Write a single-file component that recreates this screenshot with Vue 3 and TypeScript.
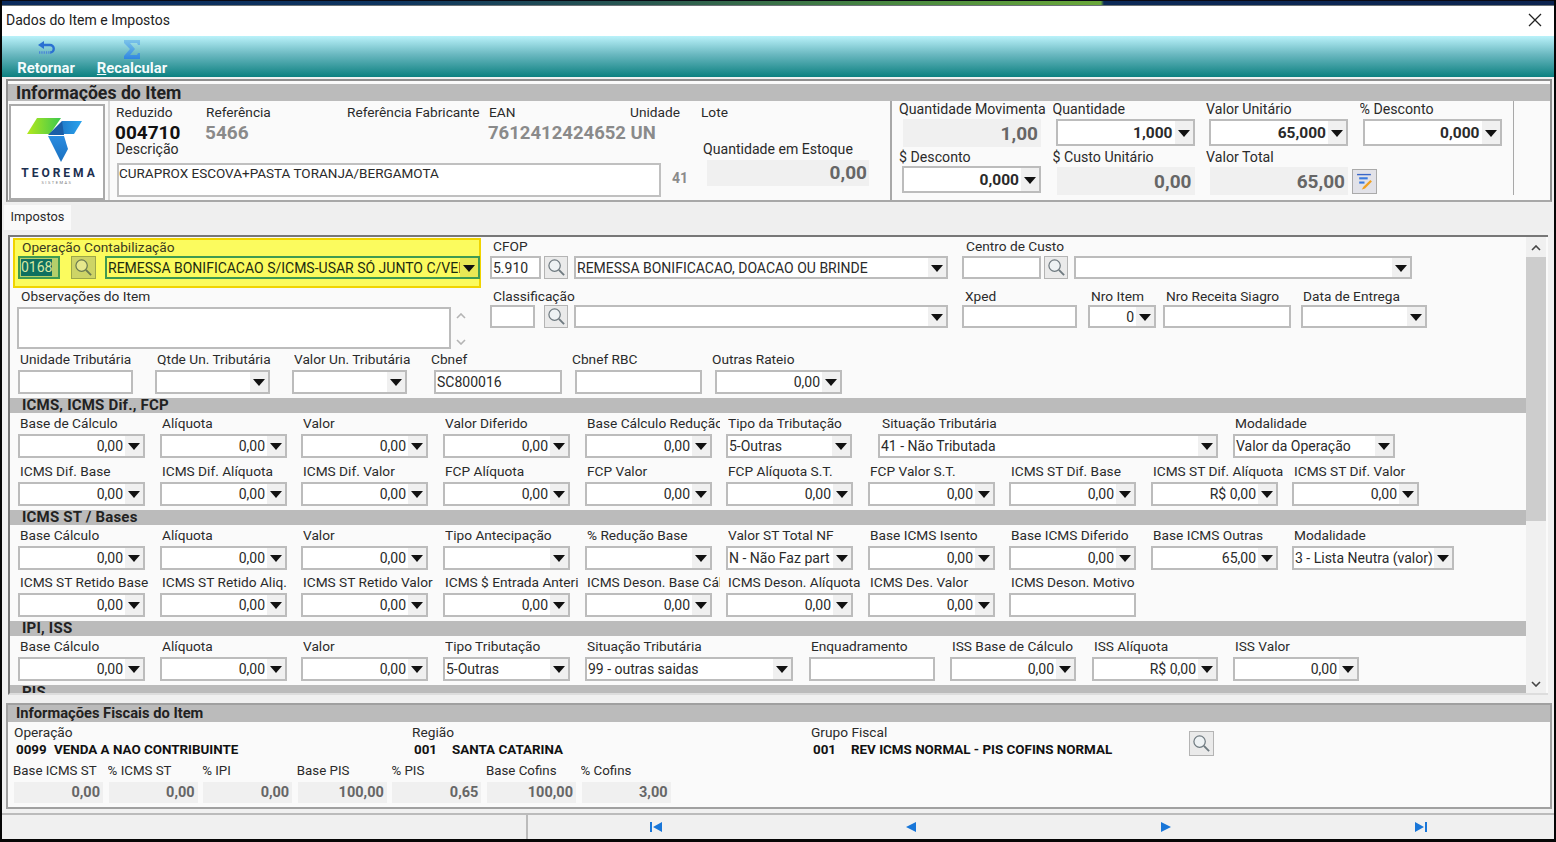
<script setup lang="ts">
type Kind = 'n' | 'c' | 'i' | 's'
interface Field { l: string; x: number; w: number; t: Kind; v: string; lx: number; mt: number; h: number }
interface Row { section?: string; fields?: Field[]; base?: number; yellow?: boolean; cls?: string }

const f = (l: string, x: number, w: number, t: Kind, v = '', lx = 2, mt = 3, h = 24): Field => ({ l, x, w, t, v, lx, mt, h })
const cols = [18, 160, 301, 443, 585, 726, 868, 1009, 1151, 1292]
const nums = (labels: string[], vals: Record<number, string> = {}) =>
  labels.map((l, i) => f(l, cols[i], 127, 'n', vals[i] ?? '0,00'))

const rows: Row[] = [
  {
    yellow: true, base: 481, cls: 'r-a',
    fields: [
      f('CFOP', 490, 51, 'i', '5.910', 3, 2, 23),
      f('', 544, 24, 's', '', 0, 2, 23),
      f('', 574, 374, 'c', 'REMESSA BONIFICACAO, DOACAO OU BRINDE', 0, 2, 23),
      f('Centro de Custo', 962, 79, 'i', '', 4, 2, 23),
      f('', 1044, 24, 's', '', 0, 2, 23),
      f('', 1074, 338, 'c', '', 0, 2, 23),
    ],
  },
  {
    cls: 'r-b', base: 490,
    fields: [
      f('Classificação', 490, 45, 'i', '', 3, 1, 23),
      f('', 544, 24, 's', '', 0, 1, 23),
      f('', 574, 374, 'c', '', 0, 1, 23),
      f('Xped', 962, 115, 'i', '', 3, 1, 23),
      f('Nro Item', 1088, 68, 'n', '0', 3, 1, 23),
      f('Nro Receita Siagro', 1163, 128, 'i', '', 3, 1, 23),
      f('Data de Entrega', 1301, 126, 'c', '', 2, 1, 23),
    ],
  },
  {
    cls: 'r-c',
    fields: [
      f('Unidade Tributária', 18, 115, 'i'),
      f('Qtde Un. Tributária', 155, 115, 'c'),
      f('Valor Un. Tributária', 292, 115, 'c'),
      f('Cbnef', 434, 128, 'i', 'SC800016', -3),
      f('Cbnef RBC', 575, 127, 'i', '', -3),
      f('Outras Rateio', 715, 127, 'n', '0,00', -3),
    ],
  },
  { section: 'ICMS, ICMS Dif., FCP' },
  {
    fields: [
      ...nums(['Base de Cálculo', 'Alíquota', 'Valor', 'Valor Diferido', 'Base Cálculo Redução']),
      f('Tipo da Tributação', 726, 126, 'c', '5-Outras'),
      f('Situação Tributária', 878, 340, 'c', '41 - Não Tributada', 4),
      f('Modalidade', 1233, 162, 'c', 'Valor da Operação'),
    ],
  },
  {
    cls: 'gap',
    fields: nums(
      ['ICMS Dif. Base', 'ICMS Dif. Alíquota', 'ICMS Dif. Valor', 'FCP Alíquota', 'FCP Valor', 'FCP Alíquota S.T.', 'FCP Valor S.T.', 'ICMS ST Dif. Base', 'ICMS ST Dif. Alíquota', 'ICMS ST Dif. Valor'],
      { 8: 'R$ 0,00' },
    ),
  },
  { section: 'ICMS ST / Bases' },
  {
    fields: [
      ...nums(['Base Cálculo', 'Alíquota', 'Valor']),
      f('Tipo Antecipação', 443, 127, 'c'),
      f('% Redução Base', 585, 127, 'c'),
      f('Valor ST Total NF', 726, 127, 'c', 'N - Não Faz part'),
      f('Base ICMS Isento', 868, 127, 'n', '0,00'),
      f('Base ICMS Diferido', 1009, 127, 'n', '0,00'),
      f('Base ICMS Outras', 1151, 127, 'n', '65,00'),
      f('Modalidade', 1292, 162, 'c', '3 - Lista Neutra (valor)'),
    ],
  },
  {
    cls: 'gap4',
    fields: [
      ...nums(['ICMS ST Retido Base', 'ICMS ST Retido Aliq.', 'ICMS ST Retido Valor', 'ICMS $ Entrada Anterior', 'ICMS Deson. Base Cálculo', 'ICMS Deson. Alíquota', 'ICMS Des. Valor']),
      f('ICMS Deson. Motivo', 1009, 127, 'i'),
    ],
  },
  { section: 'IPI, ISS' },
  {
    fields: [
      ...nums(['Base Cálculo', 'Alíquota', 'Valor']),
      f('Tipo Tributação', 443, 127, 'c', '5-Outras'),
      f('Situação Tributária', 585, 208, 'c', '99 - outras saidas'),
      f('Enquadramento', 809, 126, 'i'),
      f('ISS Base de Cálculo', 950, 126, 'n', '0,00'),
      f('ISS Alíquota', 1092, 126, 'n', 'R$ 0,00'),
      f('ISS Valor', 1233, 126, 'n', '0,00'),
    ],
  },
  { section: 'PIS' },
]

const gapOf = (r: Row, i: number): string => {
  const list = r.fields as Field[]
  const start = i === 0 ? (r.base ?? 10) : list[i - 1].x + list[i - 1].w
  return list[i].x - start + 'px'
}

const fiscal = [
  { l: 'Base ICMS ST', v: '0,00' },
  { l: '% ICMS ST', v: '0,00' },
  { l: '% IPI', v: '0,00' },
  { l: 'Base PIS', v: '100,00' },
  { l: '% PIS', v: '0,65' },
  { l: 'Base Cofins', v: '100,00' },
  { l: '% Cofins', v: '3,00' },
]
</script>

<template>
  <div class="screen">
    <div class="strip"></div>
    <div class="title">
      <span>Dados do Item e Impostos</span>
      <svg class="close" viewBox="0 0 14 14" width="14" height="14"><path d="M1 1 13 13M13 1 1 13" stroke="#222" stroke-width="1.3" fill="none" /></svg>
    </div>

    <div class="toolbar">
      <div class="tool t1">
        <svg class="ret" viewBox="0 0 20 16" width="20" height="16">
          <path d="M2 5 8 1v8z" fill="#2a70d2" />
          <path d="M7 5h7a3.600 3.600 0 0 1 0 7.500" stroke="#2a70d2" stroke-width="2.400" fill="none" />
          <path d="M3 12.500h12" stroke="#4a86d8" stroke-width="2.400" stroke-dasharray="1.300 1" fill="none" />
        </svg>
        <span>Retornar</span>
      </div>
      <div class="tool t2">
        <svg viewBox="0 0 20 19" width="20" height="19">
          <defs>
            <linearGradient id="sig" x1="0" x2="0" y1="0" y2="1"><stop offset="0" stop-color="#7cc4ea" /><stop offset="1" stop-color="#2f86e0" /></linearGradient>
          </defs>
          <path d="M2 0h16v5h-2l-1-2H8l5 6-5 6h7l1-2h2v6H2v-3l6-7-6-6z" fill="url(#sig)" />
        </svg>
        <span><u>R</u>ecalcular</span>
      </div>
    </div>

    <section class="info">
      <h2 class="bar big">Informações do Item</h2>
      <div class="info-body">
        <div class="logo">
          <svg viewBox="0 0 64 48" width="64" height="48">
            <defs>
              <linearGradient id="lg1" x1="0" x2="1" y1="0" y2="0"><stop offset="0" stop-color="#b4e81c" /><stop offset="1" stop-color="#3cc84e" /></linearGradient>
              <linearGradient id="lg2" x1="0" x2="1" y1="0" y2="0"><stop offset="0" stop-color="#1f78c8" /><stop offset="1" stop-color="#2aa4ee" /></linearGradient>
              <linearGradient id="lg3" x1="0" x2="0" y1="0" y2="1"><stop offset="0" stop-color="#2a8ce0" /><stop offset="1" stop-color="#1a70c0" /></linearGradient>
            </defs>
            <path d="M4 18 14 2h24L27 18z" fill="url(#lg1)" />
            <path d="M39 5h20l-8 13H36z" fill="url(#lg2)" />
            <path d="M39 5 25 19h16z" fill="#1a5ea8" />
            <path d="M25 20h16l4 13-7 13z" fill="url(#lg3)" />
          </svg>
          <div class="logo-name">TEOREMA</div>
          <div class="logo-sub">SISTEMAS</div>
        </div>

        <div class="mid">
          <div class="mid-labels">
            <span class="w90">Reduzido</span>
            <span class="w141">Referência</span>
            <span class="w142">Referência Fabricante</span>
            <span class="w141">EAN</span>
            <span class="w71">Unidade</span>
            <span>Lote</span>
          </div>
          <div class="mid-values">
            <b class="code">004710</b>
            <b class="ref">5466</b>
            <b class="ean">7612412424652 UN</b>
          </div>
          <div class="mid-labels second">
            <span class="w587">Descrição</span>
            <span>Quantidade em Estoque</span>
          </div>
          <div class="mid-desc">
            <div class="desc">CURAPROX ESCOVA+PASTA TORANJA/BERGAMOTA</div>
            <b class="n41">41</b>
            <div class="ro stock">0,00</div>
          </div>
        </div>

        <div class="right">
          <div class="rc"><label>Quantidade Movimenta</label><div class="ro r-big">1,00</div></div>
          <div class="rc"><label>Quantidade</label><div class="inp num strong"><em>1,000</em><i class="arrow"></i></div></div>
          <div class="rc"><label>Valor Unitário</label><div class="inp num strong"><em>65,000</em><i class="arrow"></i></div></div>
          <div class="rc"><label>% Desconto</label><div class="inp num strong"><em>0,000</em><i class="arrow"></i></div></div>
          <div class="rc"><label>$ Desconto</label><div class="inp num strong low"><em>0,000</em><i class="arrow"></i></div></div>
          <div class="rc"><label>$ Custo Unitário</label><div class="ro r-big">0,00</div></div>
          <div class="rc">
            <label>Valor Total</label>
            <div class="total-line">
              <div class="ro r-big">65,00</div>
              <div class="edit-btn">
                <svg viewBox="0 0 16 16" width="17" height="17">
                  <path d="M1 1.500h13" stroke="#3a66c8" stroke-width="1.300" />
                  <path d="M3 5h8" stroke="#3a7ae0" stroke-width="2" />
                  <path d="M3 9h5" stroke="#3a7ae0" stroke-width="2" />
                  <path d="M13.500 6.500 7 13l-1.500 2.500L8.500 14.500 15 8z" fill="#f0a020" />
                </svg>
              </div>
            </div>
          </div>
        </div>
      </div>
    </section>

    <div class="tabs"><div class="tab">Impostos</div></div>

    <section class="page">
      <div class="scroll">
        <template v-for="(r, ri) in rows" :key="ri">
          <h3 v-if="r.section" class="bar sec">{{ r.section }}</h3>
          <div v-else class="row" :class="r.cls">
            <div v-if="r.yellow" class="yellow">
              <label>Operação Contabilização</label>
              <div class="y-line">
                <div class="y-code"><span>0168</span></div>
                <div class="search y-search">
                  <svg viewBox="0 0 20 20" width="19" height="19"><circle cx="8" cy="8" r="6" fill="#e6e88c" stroke="#6a7a50" stroke-width="1.300" /><path d="m12.500 12.500 5.500 5.500" stroke="#6a7a50" stroke-width="2" /></svg>
                </div>
                <div class="y-combo"><span>REMESSA BONIFICACAO S/ICMS-USAR SÓ JUNTO C/VENDA</span><i class="arrow y-arrow"></i></div>
              </div>
            </div>
            <div v-else-if="ri === 1" class="obs">
              <label>Observações do Item</label>
              <div class="obs-line">
                <div class="inp obs-box"></div>
                <div class="obs-scroll">
                  <svg viewBox="0 0 10 6" width="10" height="6"><path d="m1 5 4-4 4 4" stroke="#b4b4b4" stroke-width="1.600" fill="none" /></svg>
                  <svg viewBox="0 0 10 6" width="10" height="6"><path d="m1 1 4 4 4-4" stroke="#b4b4b4" stroke-width="1.600" fill="none" /></svg>
                </div>
              </div>
            </div>
            <div
              v-for="(c, i) in r.fields"
              :key="i"
              class="field"
              :style="{ width: c.w + 'px', marginLeft: gapOf(r, i) }"
            >
              <label :style="{ marginLeft: c.lx + 'px' }">{{ c.l }}</label>
              <div v-if="c.t === 's'" class="search" :style="{ marginTop: c.mt + 'px', height: c.h + 'px' }">
                <svg viewBox="0 0 20 20" width="19" height="19"><circle cx="8" cy="8" r="6" fill="#eef2f4" stroke="#6f7a80" stroke-width="1.300" /><path d="m12.500 12.500 5.500 5.500" stroke="#6f7a80" stroke-width="2" /></svg>
              </div>
              <div v-else class="inp" :class="{ num: c.t === 'n' }" :style="{ marginTop: c.mt + 'px', height: c.h + 'px' }">
                <em>{{ c.v }}</em>
                <i v-if="c.t !== 'i'" class="arrow"></i>
              </div>
            </div>
          </div>
        </template>
      </div>
      <div class="sbar">
        <svg viewBox="0 0 10 6" width="10" height="6"><path d="m1 5 4-4 4 4" stroke="#444" stroke-width="1.600" fill="none" /></svg>
        <div class="thumb"></div>
        <svg class="down" viewBox="0 0 10 6" width="10" height="6"><path d="m1 1 4 4 4-4" stroke="#444" stroke-width="1.600" fill="none" /></svg>
      </div>
    </section>

    <section class="fiscal">
      <h2 class="bar fis">Informações Fiscais do Item</h2>
      <div class="f-top">
        <div class="f-col c1"><label>Operação</label><b><span class="code-a">0099</span>VENDA A NAO CONTRIBUINTE</b></div>
        <div class="f-col c2"><label>Região</label><b><span class="code-b">001</span>SANTA CATARINA</b></div>
        <div class="f-col c3"><label>Grupo Fiscal</label><b><span class="code-b">001</span>REV ICMS NORMAL - PIS COFINS NORMAL</b></div>
        <div class="search f-search">
          <svg viewBox="0 0 20 20" width="19" height="19"><circle cx="8" cy="8" r="6" fill="#eef2f4" stroke="#6f7a80" stroke-width="1.300" /><path d="m12.500 12.500 5.500 5.500" stroke="#6f7a80" stroke-width="2" /></svg>
        </div>
      </div>
      <div class="f-bottom">
        <div v-for="x in fiscal" :key="x.l" class="f-item">
          <label>{{ x.l }}</label>
          <div class="ro f-ro">{{ x.v }}</div>
        </div>
      </div>
    </section>

    <footer class="status">
      <div class="st-left"></div>
      <div class="st-right">
        <svg viewBox="0 0 14 12" width="14" height="12"><path d="M1 1h2v10H1zM13 1v10L4 6z" fill="#1976d8" /></svg>
        <svg viewBox="0 0 14 12" width="14" height="12"><path d="M12 1v10L2 6z" fill="#1976d8" /></svg>
        <svg viewBox="0 0 14 12" width="14" height="12"><path d="M2 1v10l10-5z" fill="#1976d8" /></svg>
        <svg viewBox="0 0 14 12" width="14" height="12"><path d="M11 1h2v10h-2zM1 1v10l9-5z" fill="#1976d8" /></svg>
      </div>
    </footer>
  </div>
</template>

<style>
html, body { margin: 0; background: #000; }
</style>

<style scoped>
.screen {
  width: 1556px; height: 842px; box-sizing: border-box; border: solid #060606; border-width: 0 2px 3px; background: #f0f0f0;
  overflow: hidden; display: flex; flex-direction: column;
  font: 14px/16px Roboto, "Noto Sans", sans-serif; color: #2a2a2a;
}
label, .mid-labels { display: block; white-space: nowrap; overflow: hidden; font-size: 13.700px; }
.mid-labels { display: flex; }
em { font-style: normal; }
.strip { height: 6px; flex: none; box-sizing: border-box; border-top: 1px solid #0a0a14; border-bottom: 1px solid #6c7478; background: linear-gradient(90deg, #0b2a5c 0, #0e3560 25%, #2a5a50 42%, #4a8a40 58%, #6aa83a 70.800%, #0c2a58 71%, #0c2450 100%); }
.title { height: 30px; flex: none; box-sizing: border-box; padding: 0 12px 2px 4px; background: #fff; display: flex; align-items: center; justify-content: space-between; color: #222; }
.toolbar { height: 41px; flex: none; display: flex; background: linear-gradient(#baf2fa, #6ab8c0 45%, #0c8080); }
.tool { display: flex; flex-direction: column; align-items: center; justify-content: flex-end; font-weight: 700; font-size: 14.800px; line-height: 18px; height: 41px; }
.tool svg { flex: none; }
.tool span { color: #f4fbfc; white-space: nowrap; }
.ret { margin-bottom: 3px; }
.t1 { width: 62px; margin-left: 13px; }
.t2 { width: 72px; margin-left: 19px; }
.info { flex: none; height: 123px; margin: 2px 2px 0 4px; box-sizing: border-box; border: 2px solid #8e8e8e; border-bottom-color: #a8a8a8; background: #fafafa; display: flex; flex-direction: column; }
.bar { margin: 0; background: #bbb; color: #222; font-weight: 700; }
.big { font-size: 17.700px; height: 17px; line-height: 19px; margin-top: 3px; padding-left: 8px; flex: none; white-space: nowrap; overflow: hidden; }
.info-body { display: flex; flex: 1; min-height: 0; }
.logo { width: 92px; height: 92px; margin: 3px 0 0 1px; border: 2px solid #aaa; background: #fff; display: flex; flex-direction: column; align-items: center; flex: none; }
.logo svg { margin: 10px 4px 0 0; flex: none; }
.logo-name { font-weight: 700; font-size: 12px; letter-spacing: 3px; color: #1c3050; line-height: 12px; margin: 3px 0 0 5px; white-space: nowrap; }
.logo-sub { font-size: 4px; line-height: 5px; color: #777; letter-spacing: 1.500px; margin-top: 1px; white-space: nowrap; }
.mid { width: 784px; margin-left: 3px; box-sizing: border-box; padding: 3px 0 0 6px; border-left: 2px solid #d8d8d8; border-right: 2px solid #a8a8a8; flex: none; }
.mid-labels { height: 16px; }
.w90 { width: 90px; } .w141 { width: 141px; } .w142 { width: 142px; } .w71 { width: 71px; } .w587 { width: 587px; }
.mid-values { display: flex; height: 22px; margin-top: 2px; align-items: center; font-size: 19px; }
.code { width: 90px; color: #111; margin-left: -1px; }
.ref { width: 283px; color: #8a8a8a; }
.ean { color: #8a8a8a; font-size: 18.500px; white-space: nowrap; }
.second { margin-top: -3px; font-size: 14.100px; }
.mid-desc { display: flex; align-items: flex-start; }
.desc { width: 544px; height: 34px; margin: 6px 0 0 1px; box-sizing: border-box; border: 2px solid #c0c0c0; background: #fff; padding: 0; font-size: 13.500px; flex: none; white-space: nowrap; overflow: hidden; }
.n41 { width: 46px; padding: 13px 0 0 11px; box-sizing: border-box; color: #8a8a8a; font-size: 14px; }
.ro { background: #f0f0f0; color: #666; font-weight: 700; text-align: right; box-sizing: border-box; }
.stock { width: 162px; height: 26px; margin-top: 3px; font-size: 19px; line-height: 26px; padding-right: 2px; }
.right { width: 622px; height: 94px; box-sizing: border-box; border-right: 1px solid #a8a8a8; display: grid; grid-template-columns: 153.500px 153.500px 153.500px 150px; grid-template-rows: 48px 46px; padding-left: 7px; flex: none; }
.rc label { height: 16px; width: 150px; font-size: 14.200px; }
.inp { box-sizing: border-box; background: #fff; border: 2px solid #bcbcbc; display: flex; align-items: center; justify-content: space-between; overflow: hidden; position: relative; }
.inp em { padding-left: 1px; white-space: nowrap; overflow: hidden; flex: 1; min-width: 0; }
.inp.num em { text-align: right; padding-right: 2px; }
.arrow { flex: none; width: 18px; height: 100%; background: #f0f0f0; position: relative; font-style: normal; }
.arrow::after { content: ""; position: absolute; left: 3px; top: 50%; margin-top: -3px; border: 6px solid transparent; border-top: 7px solid #111; border-bottom: 0; }
.strong { width: 139px; height: 27px; margin: 2px 0 0 3px; font-weight: 700; font-size: 15.500px; }
.low { margin-top: 1px; }
.r-big { width: 138px; height: 28px; margin: 2px 0 0 4px; font-size: 19px; line-height: 29px; padding-right: 3px; flex: none; }
.total-line { display: flex; align-items: flex-start; }
.edit-btn { width: 25px; height: 25px; margin: 4px 0 0 4px; box-sizing: border-box; border: 1.500px solid #aaa; background: #e2e2e8; display: flex; align-items: center; justify-content: center; flex: none; }
.tabs { height: 29px; flex: none; margin-top: 1px; background: #efefef; box-sizing: border-box; padding-top: 2px; }
.tab { width: 67px; height: 25px; margin-left: 2px; background: #fafafa; line-height: 24px; text-align: center; font-size: 12.800px; }
.page { height: 460px; flex: none; margin: 3px 6px 0 6px; border-top: 2px solid #777; border-left: 2px solid #777; border-bottom: 2px solid #ddd; display: flex; background: #fafafa; box-sizing: border-box; }
.scroll { width: 1516px; height: 456px; overflow: hidden; flex: none; padding-top: 1px; box-sizing: border-box; }
.row { display: flex; align-items: flex-start; }
.r-a { height: 50px; }
.r-b { height: 61px; }
.r-c { margin-top: 2px; }
.gap { margin-top: 5px; }
.gap4 { margin-top: 4px; }
.field { flex: none; }
.field label { width: 133px; height: 16px; flex: none; }
.yellow { width: 468px; height: 50px; margin-left: 3px; box-sizing: border-box; background: #fbfb5e; border: 2px solid #f0d400; flex: none; }
.yellow label { margin: -1px 0 0 7px; height: 16px; color: #3a3a20; }
.y-line { display: flex; margin: 1px 0 0 3px; height: 23px; }
.y-code { width: 42px; box-sizing: border-box; border: 2px solid #3f9a50; background: #b5cf6a; padding: 1px 0 0 1px; flex: none; }
.y-code span { background: #0e7060; color: #d7e7a0; display: inline-block; height: 17px; line-height: 17px; }
.search { box-sizing: border-box; border: 1.500px solid #b4b4b4; background: #eaeaea; display: flex; align-items: center; justify-content: center; }
.y-search { width: 25px; margin-left: 11px; border-color: #9da84a; background: #cdd466; flex: none; }
.y-combo { width: 375px; margin-left: 9px; box-sizing: border-box; border: 2px solid #3f9a50; display: flex; align-items: center; flex: none; color: #1c2c10; }
.y-combo span { flex: 1; min-width: 0; overflow: hidden; white-space: nowrap; padding-left: 1px; }
.y-arrow { background: #e8e855; }
.obs { width: 480px; flex: none; margin-left: 7px; margin-right: -7px; }
.obs label { margin-left: 4px; height: 16px; }
.obs-line { display: flex; margin-top: 3px; }
.obs-box { width: 434px; height: 42px; flex: none; }
.obs-scroll { width: 20px; height: 42px; display: flex; flex-direction: column; align-items: center; justify-content: space-between; padding: 6px 0 4px; box-sizing: border-box; }
.sec { height: 15px; line-height: 15px; margin-top: 4px; margin-bottom: 2px; padding-left: 12px; font-size: 15px; letter-spacing: .2px; }
.sbar { width: 20px; flex: none; background: #f0f0f0; display: flex; flex-direction: column; align-items: center; padding-top: 8px; box-sizing: border-box; }
.thumb { width: 100%; height: 264px; margin-top: 6px; background: #cdcdcd; }
.down { margin-top: auto; margin-bottom: 6px; }
.fiscal { height: 106px; flex: none; margin: 8px 2px 0 4px; box-sizing: border-box; border: 2px solid #a0a0a0; background: #fafafa; }
.fis { height: 17px; line-height: 17px; font-size: 14.700px; padding-left: 8px; white-space: nowrap; }
.f-top { display: flex; height: 38px; padding-left: 6px; }
.f-col { flex: none; padding-top: 2px; }
.f-col label { height: 16px; }
.f-col b { display: block; margin-top: 2px; padding-left: 2px; font-size: 13.400px; white-space: nowrap; color: #111; }
.c1 { width: 398px; }
.c2 { width: 399px; }
.c3 { width: 378px; }
.code-a { display: inline-block; width: 38px; }
.code-b { display: inline-block; width: 38px; }
.f-search { width: 25px; height: 25px; margin-top: 9px; flex: none; }
.f-bottom { display: flex; padding: 3px 0 0 6px; gap: 5.600px; }
.f-item { width: 89px; }
.f-item label { width: 100px; height: 16px; margin-left: -1px; font-size: 13.300px; }
.f-ro { height: 21px; margin-top: 3px; font-size: 14.500px; line-height: 21px; padding-right: 3px; }
.status { height: 26px; flex: none; margin-top: 4px; background: #f0f0f0; border-top: 2px solid #bbb; box-sizing: border-box; display: flex; }
.st-left { width: 524px; border-right: 2px solid #bbb; flex: none; }
.st-right { flex: 1; display: flex; align-items: center; padding-left: 121px; gap: 241px; }
</style>
